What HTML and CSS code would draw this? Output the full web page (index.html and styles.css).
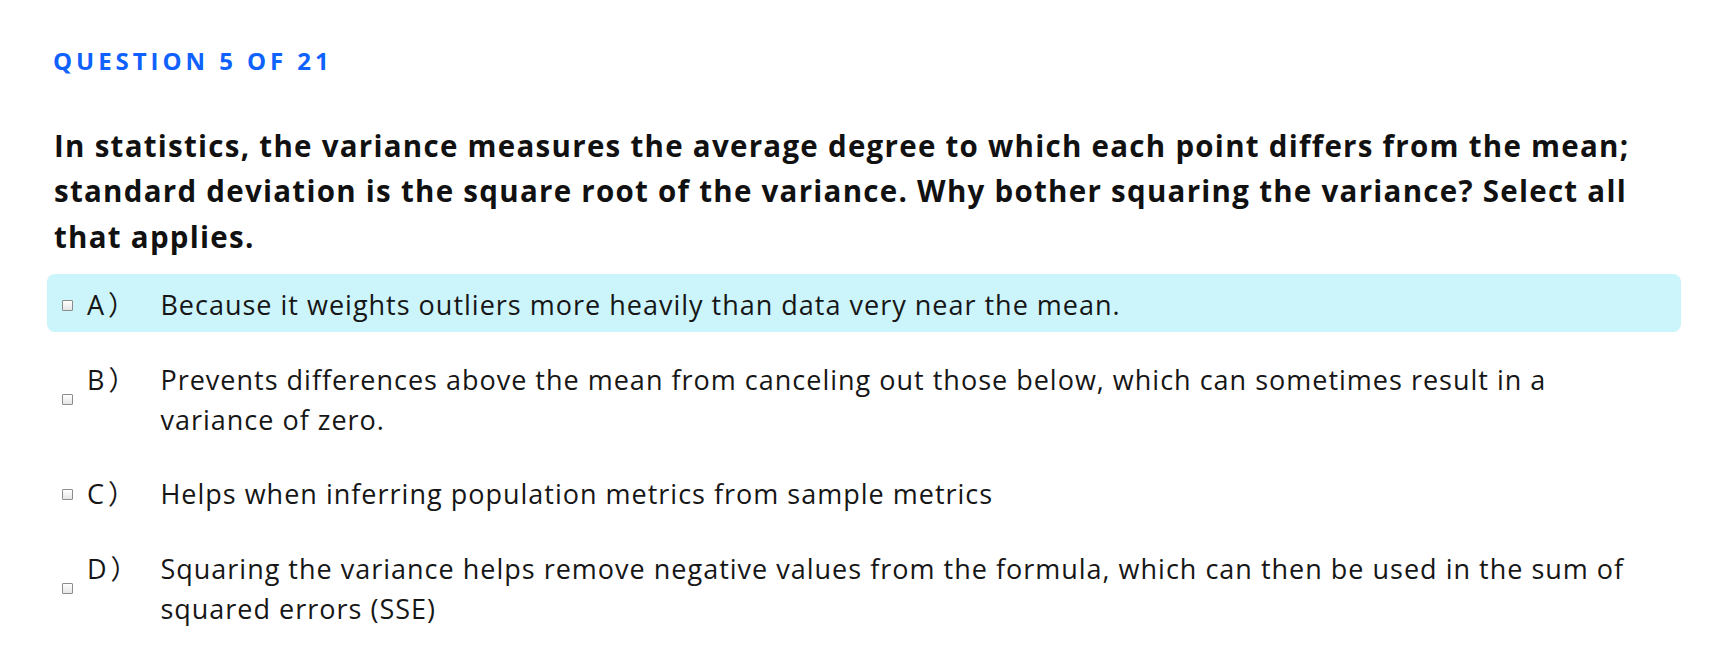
FILE: index.html
```html
<!DOCTYPE html>
<html lang="en">
<head>
<meta charset="utf-8">
<title>Question 5 of 21</title>
<link rel="stylesheet" href="styles.css">
</head>
<body>
<main class="quiz">
  <p class="counter">QUESTION 5 OF 21</p>
  <h2 class="question">In statistics, the variance measures the average degree to which each point differs from the mean; standard deviation is the square root of the variance. Why bother squaring the variance? Select all that applies.</h2>
  <ul class="options">
    <li class="option option--active">
      <input type="checkbox" class="check">
      <div class="option-body"><span class="letter">A）</span><span class="text">Because it weights outliers more heavily than data very near the mean.</span></div>
    </li>
    <li class="option">
      <input type="checkbox" class="check">
      <div class="option-body"><span class="letter">B）</span><span class="text">Prevents differences above the mean from canceling out those below, which can sometimes result in a variance of zero.</span></div>
    </li>
    <li class="option">
      <input type="checkbox" class="check">
      <div class="option-body"><span class="letter">C）</span><span class="text">Helps when inferring population metrics from sample metrics</span></div>
    </li>
    <li class="option">
      <input type="checkbox" class="check">
      <div class="option-body"><span class="letter">D）</span><span class="text">Squaring the variance helps remove negative values from the formula, which can then be used in the sum of squared errors (SSE)</span></div>
    </li>
  </ul>
</main>
</body>
</html>
```

FILE: styles.css
```css
html, body {
  margin: 0;
  padding: 0;
  background: #ffffff;
}

body {
  font-family: "Open Sans", "Noto Sans CJK SC", sans-serif;
  color: #161616;
}

.quiz {
  width: 1634px;
  padding: 47px 0 0 47px;
}

.counter {
  margin: 0 0 0 6px;
  font-size: 24px;
  line-height: 28px;
  font-weight: 700;
  letter-spacing: 3.95px;
  color: #0f62fe;
}

.question {
  margin: 48px 0 15px 7px;
  font-size: 29.5px;
  line-height: 45.4px;
  font-weight: 700;
  letter-spacing: 1.27px;
  color: #111111;
}

.options {
  list-style: none;
  margin: 0;
  padding: 0;
  display: flex;
  flex-direction: column;
  gap: 16.5px;
}

.option {
  display: flex;
  align-items: center;
  padding: 11px 40px 7px 12px;
  border-radius: 8px;
  font-size: 27px;
  line-height: 40px;
  letter-spacing: 1px;
}

.option--active {
  background: #ccf4fb;
}

.check {
  appearance: none;
  -webkit-appearance: none;
  box-sizing: border-box;
  width: 11px;
  height: 11px;
  margin: 0 14px 0 3px;
  flex: none;
  border: 1px solid #8c8c8c;
  border-radius: 1px;
  background: linear-gradient(180deg, #ffffff 0%, #e6e6e6 100%);
}

.option-body {
  display: flex;
  align-items: flex-start;
  flex: 1;
}

.letter {
  flex: none;
  width: 73.4px;
  letter-spacing: 4px;
}

.text {
  flex: 1;
}
```
